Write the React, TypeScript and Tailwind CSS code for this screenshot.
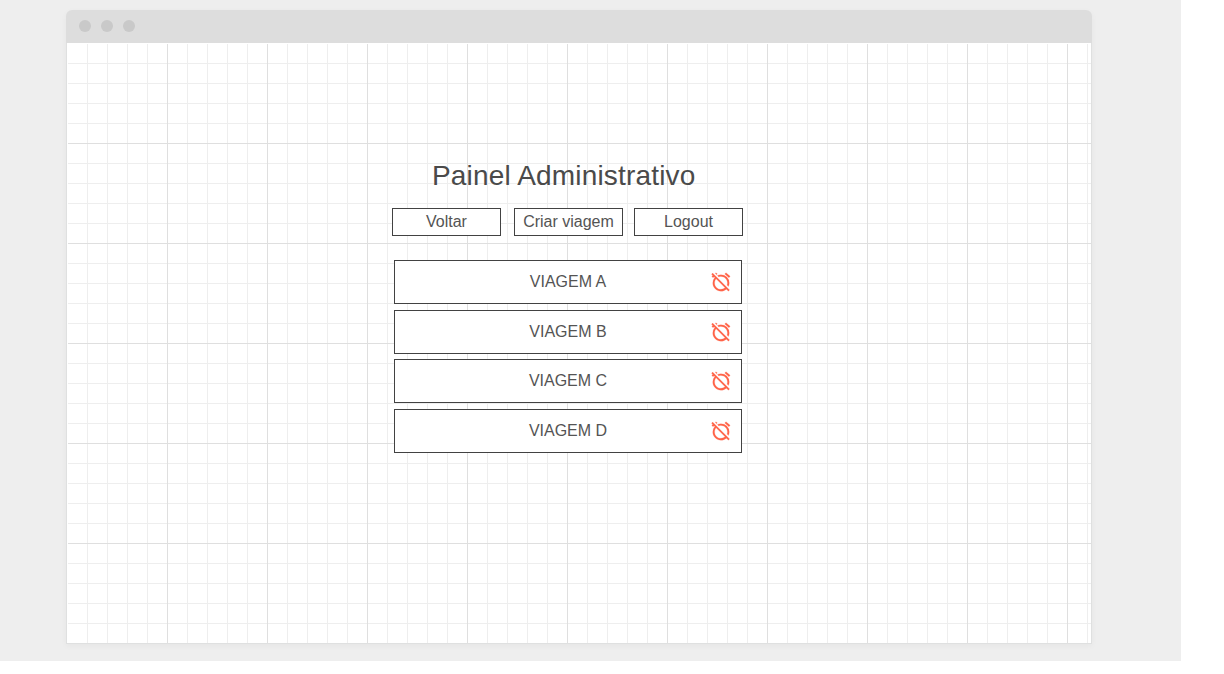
import { MdAlarmOff } from "react-icons/md";

const actions = [
  { label: "Voltar", spacing: "mr-[13px]" },
  { label: "Criar viagem", spacing: "mr-[11px]" },
  { label: "Logout", spacing: "" },
];

const trips = [
  { name: "VIAGEM A", spacing: "mb-[6px]" },
  { name: "VIAGEM B", spacing: "mb-[5px]" },
  { name: "VIAGEM C", spacing: "mb-[6px]" },
  { name: "VIAGEM D", spacing: "" },
];

function TitleBar() {
  return (
    <header className="flex h-[33px] shrink-0 items-start gap-[10px] rounded-t-[6px] bg-[#dddddd] pl-[13px] pt-[10px]">
      <span className="size-3 rounded-full bg-[#c9c9c9]" />
      <span className="size-3 rounded-full bg-[#c9c9c9]" />
      <span className="size-3 rounded-full bg-[#c9c9c9]" />
    </header>
  );
}

export default function App() {
  return (
    <div className="h-[674px] w-[1224px] overflow-hidden bg-white font-['Liberation_Sans',Arial,sans-serif] text-[#4a4a4a]">
      <div className="h-[661px] w-[1181px] bg-[#eeeeee] pl-[66px] pt-[10px]">
        <div className="flex h-[634px] w-[1026px] flex-col rounded-t-[6px] shadow-[0_2px_6px_rgba(0,0,0,0.04)]">
          <TitleBar />
          <div className="flex-1 border-x border-b border-[#dfe0e0] bg-white pl-px pt-px">
            <main className="flex h-[599px] w-[1023px] flex-col bg-[linear-gradient(to_right,transparent_99px,#dfdfdf_99px),linear-gradient(to_bottom,transparent_99px,#dfdfdf_99px),linear-gradient(to_right,transparent_19px,#eeeeee_19px),linear-gradient(to_bottom,transparent_19px,#eeeeee_19px)] bg-[length:100px_100px,100px_100px,20px_20px,20px_20px] pl-[324px] pt-[116px]">
              <h1 className="ml-[40px] whitespace-nowrap text-[28px] leading-[32px] tracking-[0.17px]">
                Painel Administrativo
              </h1>
              <nav className="mt-[16px] flex">
                {actions.map(({ label, spacing }) => (
                  <button
                    key={label}
                    className={`h-[28px] w-[109px] whitespace-nowrap border border-[#424242] bg-white text-[16px] leading-[26px] text-[#545454] ${spacing}`}
                  >
                    {label}
                  </button>
                ))}
              </nav>
              <ul className="ml-[2px] mt-[24px] w-[348px]">
                {trips.map(({ name, spacing }) => (
                  <li
                    key={name}
                    className={`grid h-[44px] grid-cols-[32px_1fr_32px] items-center border border-[#424242] bg-white text-[16px] leading-[18px] text-[#545454] ${spacing}`}
                  >
                    <span className="col-start-2 text-center">{name}</span>
                    <MdAlarmOff className="ml-px size-[22px] stroke-[#ff6347] stroke-[0.2px] text-[#ff6347] [&>path:first-child]:hidden" />
                  </li>
                ))}
              </ul>
            </main>
          </div>
        </div>
      </div>
    </div>
  );
}
